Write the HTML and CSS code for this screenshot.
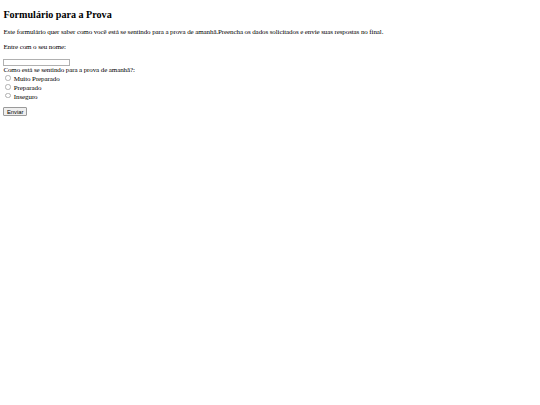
FILE: index.html
```html
<!DOCTYPE html>
<html lang="pt-BR">
<head>
<meta charset="utf-8">
<title>Formulário para a Prova</title>
<link rel="stylesheet" href="styles.css">
</head>
<body class="page">
<h2 class="title">Formulário para a Prova</h2>
<p class="text">Este formulário quer saber como você está se sentindo para a prova de amanhã.Preencha os dados solicitados e envie suas respostas no final.</p>
<form class="form">
<p class="text">Entre com o seu nome:</p>
<input type="text" class="name" name="nome"><br>
Como está se sentindo para a prova de amanhã?:<br>
<input type="radio" class="radio" name="estado" value="1"> Muito Preparado<br>
<input type="radio" class="radio" name="estado" value="2"> Preparado<br>
<input type="radio" class="radio" name="estado" value="3"> Inseguro<br>
<p class="actions"><input type="submit" class="submit" value="Enviar"></p>
</form>
</body>
</html>
```
FILE: styles.css
```css
.page {
  margin: 3.4px;
  font-family: "Liberation Serif", "Times New Roman", serif;
  font-size: 7px;
  letter-spacing: -0.1px;
  color: #000;
  background: #fff;
}
.title {
  font-size: 10.1px;
  font-weight: bold;
  letter-spacing: 0;
  margin: 5.4px 0 8.4px;
}
.text {
  margin: 7px 0;
}
.form {
  margin: 0;
}
.name {
  box-sizing: border-box;
  width: 67px;
  height: 7.5px;
  padding: 0;
  margin: 0.5px 0 0;
  border: 1px solid #b0b0b0;
  border-radius: 0;
  font-size: 5.6px;
  vertical-align: bottom;
}
.radio {
  appearance: none;
  -webkit-appearance: none;
  box-sizing: border-box;
  width: 5.4px;
  height: 5.4px;
  margin: 1.3px 1.3px 0 2.1px;
  border: 0.6px solid #b0b0b0;
  border-radius: 50%;
  background: #fff;
  vertical-align: baseline;
}
.actions {
  margin: 7px 0;
}
.submit {
  font-family: "Liberation Sans", Arial, sans-serif;
  font-size: 5.8px;
  letter-spacing: 0;
  padding: 0.6px 2.6px;
  margin: 0;
  border: 0.8px solid #9a9a9a;
  border-radius: 1px;
  background: #efefef;
  color: #000;
  line-height: normal;
}
```
